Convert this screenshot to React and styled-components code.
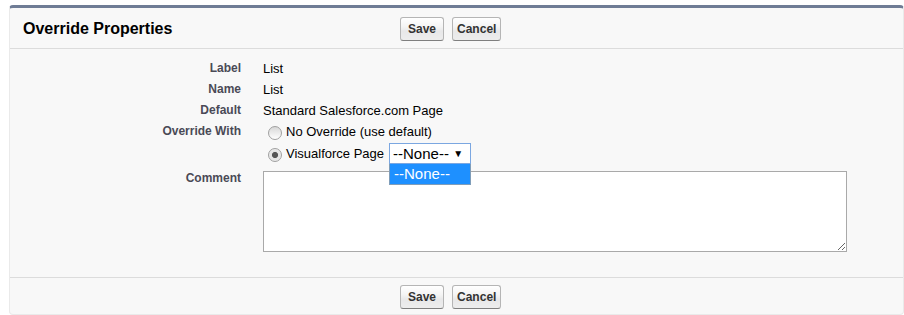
import styled, { createGlobalStyle } from "styled-components";

const GlobalStyle = createGlobalStyle`
  body {
    margin: 0;
    background: #ffffff;
    font-family: "Liberation Sans", Arial, sans-serif;
  }
`;

function App() {
  return (
    <>
      <GlobalStyle />
      <Page>
        <Panel>
          <Header>
            <Title>Override Properties</Title>
            <Buttons>
              <Button $pad={7}>Save</Button>
              <Button $pad={4}>Cancel</Button>
            </Buttons>
          </Header>
          <Body>
            <Row>
              <Label>Label</Label>
              <Value>List</Value>
            </Row>
            <Row>
              <Label>Name</Label>
              <Value>List</Value>
            </Row>
            <Row>
              <Label>Default</Label>
              <Value>Standard Salesforce.com Page</Value>
            </Row>
            <Row>
              <Label>Override With</Label>
              <div>
                <RadioLine $height={21}>
                  <Radio type="radio" name="override" readOnly />
                  No Override (use default)
                </RadioLine>
                <RadioLine $height={22}>
                  <Radio type="radio" name="override" defaultChecked />
                  Visualforce Page
                  <SelectWrap>
                    <SelectBox>
                      --None--
                      <Arrow>▼</Arrow>
                    </SelectBox>
                    <Dropdown>
                      <Option>--None--</Option>
                    </Dropdown>
                  </SelectWrap>
                </RadioLine>
              </div>
            </Row>
            <CommentRow>
              <Label $tight>Comment</Label>
              <div>
                <CommentBox />
              </div>
            </CommentRow>
          </Body>
          <Footer>
            <Buttons>
              <Button $pad={7}>Save</Button>
              <Button $pad={4}>Cancel</Button>
            </Buttons>
          </Footer>
        </Panel>
      </Page>
    </>
  );
}

export default App;

const Page = styled.div`
  padding: 5px 0 0 9px;
`;

const Panel = styled.div`
  width: 895px;
  box-sizing: border-box;
  background: #f8f8f8;
  border: 1px solid #eaeaea;
  border-top: 3px solid #6f7c95;
  border-radius: 4px;
`;

const Header = styled.div`
  display: flex;
  align-items: flex-start;
  padding: 9px 0 7px;
  border-bottom: 1px solid #dcdcdc;
`;

const Title = styled.h2`
  width: 390px;
  box-sizing: border-box;
  margin: 0;
  padding-left: 13px;
  font-size: 16px;
  font-weight: bold;
  line-height: 24px;
  color: #000;
`;

const Buttons = styled.div`
  display: flex;
  gap: 8px;
`;

const Button = styled.button`
  font-family: "Liberation Sans", Arial, sans-serif;
  font-size: 12px;
  font-weight: bold;
  line-height: 14px;
  color: #333;
  padding: 4px ${({ $pad }) => $pad}px;
  border: 1px solid #b5b5b5;
  border-bottom-color: #7f7f7f;
  border-radius: 3px;
  background: linear-gradient(#ffffff, #f4f4f4 40%, #e8e8e9 60%, #ededed);
  cursor: pointer;
`;

const Body = styled.div`
  padding: 9px 0 25px;
`;

const Row = styled.div`
  display: grid;
  grid-template-columns: 231px 1fr;
  column-gap: 22px;
`;

const CommentRow = styled(Row)`
  margin-top: 7px;
`;

const Label = styled.div`
  text-align: right;
  font-size: 12px;
  font-weight: bold;
  color: #4a4a56;
  line-height: ${({ $tight }) => ($tight ? "14px" : "21px")};
`;

const Value = styled.div`
  font-size: 13px;
  line-height: 21px;
  color: #000;
`;

const RadioLine = styled.div`
  display: flex;
  align-items: center;
  height: ${({ $height }) => $height}px;
  font-size: 13px;
  color: #000;
`;

const Radio = styled.input`
  appearance: none;
  width: 14px;
  height: 14px;
  margin: 3px 4px 0 5px;
  border: 1px solid #a0a0a0;
  border-radius: 50%;
  box-sizing: border-box;
  background: linear-gradient(#d8d8d8, #ffffff);
  &:checked {
    background: radial-gradient(circle, #555 0 2.7px, #e2e2e2 3.4px, #f4f4f4);
  }
`;

const SelectWrap = styled.div`
  position: relative;
  margin-left: 5px;
`;

const SelectBox = styled.div`
  display: flex;
  align-items: center;
  justify-content: space-between;
  width: 82px;
  height: 21px;
  box-sizing: border-box;
  padding: 0 7px 0 3px;
  border: 1px solid #7ba7e1;
  background: #fff;
  font-size: 15px;
  color: #000;
`;

const Arrow = styled.span`
  font-size: 10px;
  color: #000;
`;

const Dropdown = styled.div`
  position: absolute;
  top: 21px;
  left: 0;
  width: 82px;
  box-sizing: border-box;
  border: 1px solid #7f9db9;
  border-top: none;
  background: #1e90ff;
`;

const Option = styled.div`
  height: 20px;
  line-height: 20px;
  padding-left: 4px;
  font-size: 15px;
  color: #fff;
`;

const CommentBox = styled.textarea`
  display: block;
  width: 584px;
  height: 81px;
  box-sizing: border-box;
  margin: 0;
  border: 1px solid #a9a9a9;
  background: #fff;
  resize: both;
  font-family: "Liberation Mono", monospace;
`;

const Footer = styled.div`
  padding: 7px 0 5px 390px;
  border-top: 1px solid #dcdcdc;
`;
